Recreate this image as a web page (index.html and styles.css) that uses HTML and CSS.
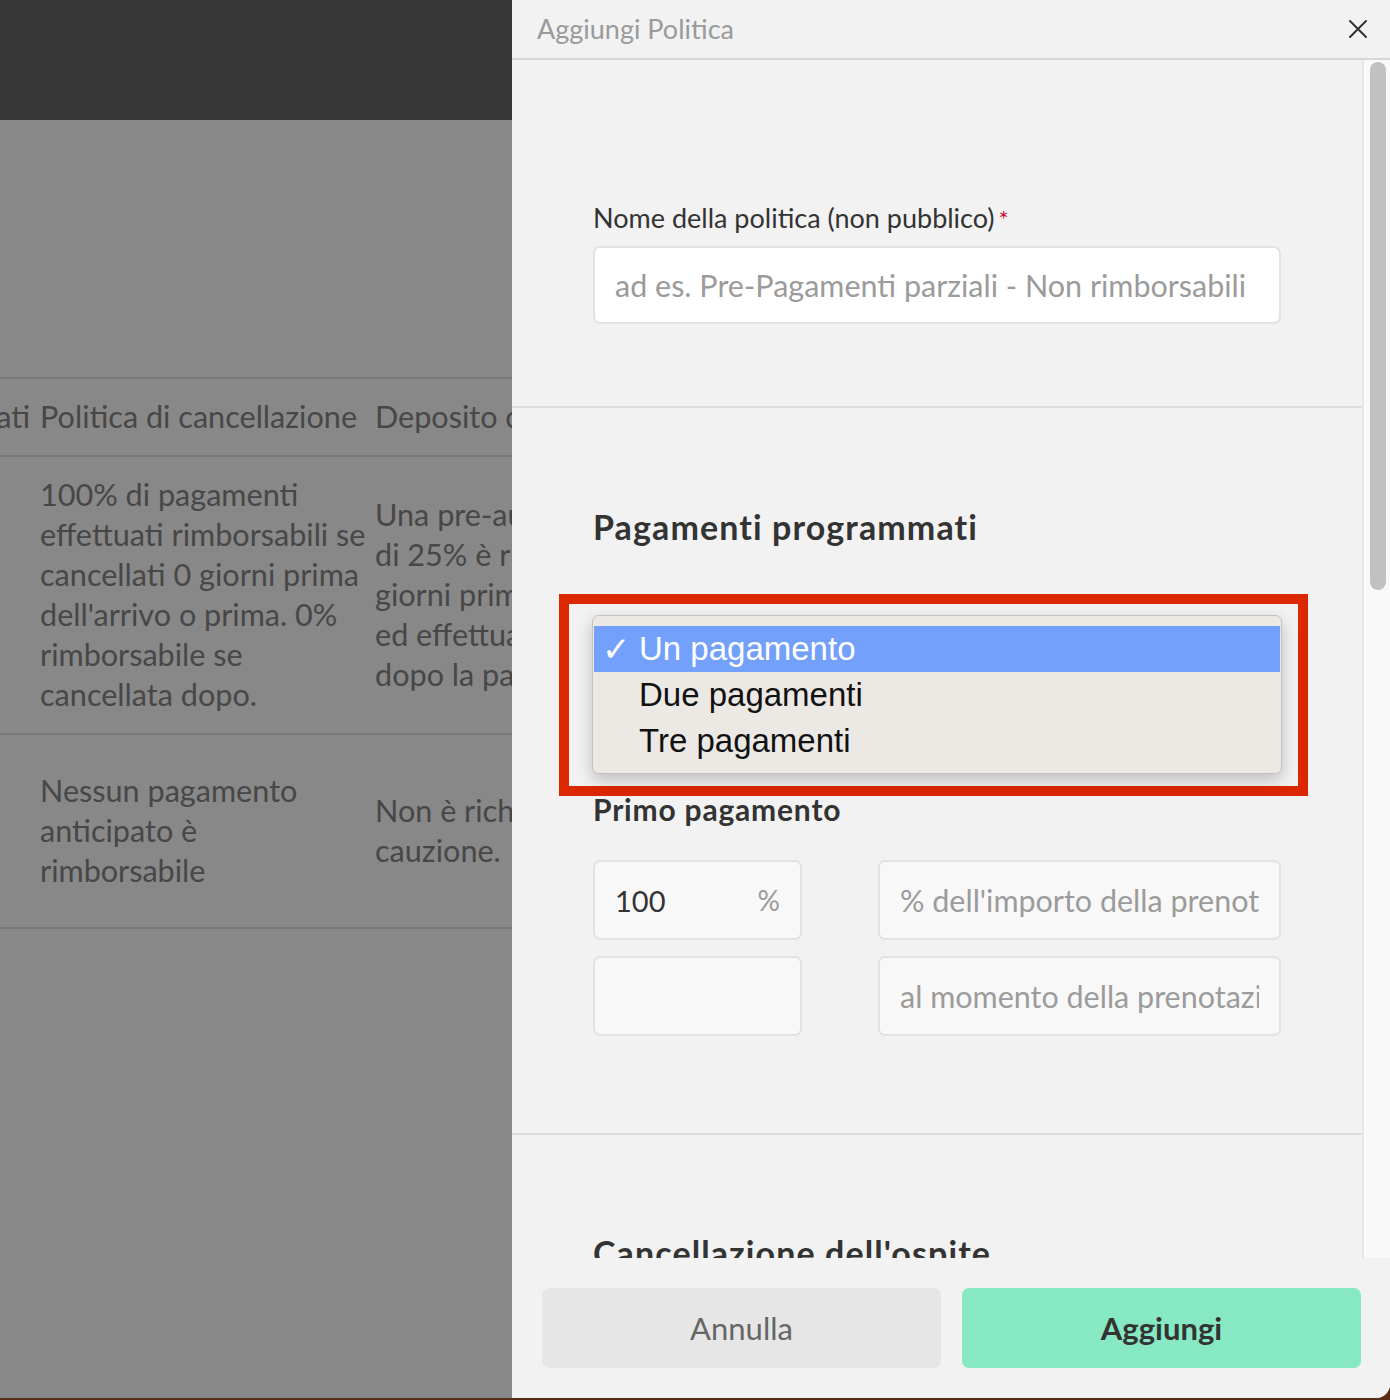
FILE: index.html
```html
<!DOCTYPE html>
<html lang="it">
<head>
<meta charset="utf-8">
<title>Aggiungi Politica</title>
<link rel="stylesheet" href="styles.css">
</head>
<body>
<div class="screen">
  <div class="backdrop">
    <div class="app-bar"></div>
    <div class="app-body">
      <table class="policy-table">
        <colgroup><col class="col-a"><col class="col-b"><col class="col-c"></colgroup>
        <thead>
          <tr>
            <th class="cut"><div class="cut-inner">Pagamenti programmati</div></th>
            <th>Politica di cancellazione</th>
            <th>Deposito cauzionale</th>
          </tr>
        </thead>
        <tbody>
          <tr class="row-a">
            <td></td>
            <td>100% di pagamenti<br>effettuati rimborsabili se<br>cancellati 0 giorni prima<br>dell'arrivo o prima. 0%<br>rimborsabile se<br>cancellata dopo.</td>
            <td>Una pre-autorizzazione<br>di 25% è richiesta 0<br>giorni prima dell'arrivo<br>ed effettuata e rilasciata<br>dopo la partenza.</td>
          </tr>
          <tr class="row-b">
            <td></td>
            <td>Nessun pagamento<br>anticipato è<br>rimborsabile</td>
            <td>Non è richiesta<br>cauzione.</td>
          </tr>
        </tbody>
      </table>
    </div>
  </div>

  <aside class="drawer">
    <header class="drawer-head">
      <h1 class="drawer-title">Aggiungi Politica</h1>
      <button class="close-btn" aria-label="Chiudi">
        <svg width="20" height="20" viewBox="0 0 20 20"><path d="M2 2 L18 18 M18 2 L2 18" stroke="#333" stroke-width="2" fill="none" stroke-linecap="round"/></svg>
      </button>
    </header>

    <div class="drawer-main">
      <div class="drawer-scroll">
        <section class="sec sec-name">
          <label class="field-label">Nome della politica (non pubblico)<span class="req">*</span></label>
          <div class="text-input white"><span class="ph">ad es. Pre-Pagamenti parziali - Non rimborsabili</span></div>
        </section>

        <section class="sec sec-pay">
          <h2 class="sec-title">Pagamenti programmati</h2>
          <div class="select-wrap">
            <div class="text-input select-box"></div>
            <div class="highlight-box"></div>
            <ul class="native-menu">
              <li class="opt active"><span class="check">✓</span>Un pagamento</li>
              <li class="opt"><span class="check"></span>Due pagamenti</li>
              <li class="opt"><span class="check"></span>Tre pagamenti</li>
            </ul>
          </div>
          <h3 class="sub-title">Primo pagamento</h3>
          <div class="pay-grid">
            <div class="text-input pct"><span class="val">100</span><span class="unit">%</span></div>
            <div class="text-input"><span class="ph clip">% dell'importo della prenotazione</span></div>
            <div class="text-input"></div>
            <div class="text-input"><span class="ph clip">al momento della prenotazione</span></div>
          </div>
        </section>

        <section class="sec sec-cancel">
          <h2 class="sec-title">Cancellazione dell'ospite</h2>
        </section>
      </div>
      <div class="scrollbar"><div class="thumb"></div></div>
    </div>

    <footer class="drawer-foot">
      <button class="btn btn-cancel">Annulla</button>
      <button class="btn btn-add">Aggiungi</button>
    </footer>
  </aside>
</div>
</body>
</html>
```

FILE: styles.css
```css
* { box-sizing: border-box; }

html, body {
  margin: 0;
  padding: 0;
}

body {
  background: #5a2b16;
  font-family: "Lato", "Source Sans Pro", "Noto Sans", sans-serif;
  width: 1390px;
  height: 1400px;
  overflow: hidden;
}

.screen {
  display: flex;
  height: 1398px;
}

/* ---------- dimmed app behind ---------- */
.backdrop {
  width: 512px;
  flex: none;
  display: flex;
  flex-direction: column;
  overflow: hidden;
  background: #888888;
}

.app-bar {
  height: 120px;
  background: #363636;
  flex: none;
}

.app-body {
  flex: 1;
  padding-top: 257px;
  overflow: hidden;
}

.policy-table {
  table-layout: fixed;
  width: 775px;
  border-collapse: collapse;
  color: #474747;
  font-size: 30.6px;
  line-height: 40px;
}

.col-a { width: 40px; }
.col-b { width: 335px; }
.col-c { width: 400px; }

.policy-table th {
  font-weight: 400;
  text-align: left;
  white-space: nowrap;
  padding: 18px 10px 18px 0;
  border-top: 2px solid #7a7a7a;
  border-bottom: 2px solid #7a7a7a;
  vertical-align: middle;
  overflow: hidden;
}

.policy-table th.cut {
  padding-right: 10px;
}

.cut-inner {
  display: flex;
  justify-content: flex-end;
  overflow: hidden;
  white-space: nowrap;
}

.policy-table td {
  padding: 18px 10px 18px 0;
  vertical-align: middle;
  border-bottom: 2px solid #7a7a7a;
  white-space: nowrap;
  overflow: hidden;
}

.policy-table .row-b td {
  padding: 36px 10px 36px 0;
}

/* ---------- drawer ---------- */
.drawer {
  width: 878px;
  flex: none;
  display: flex;
  flex-direction: column;
  background: #f2f2f2;
  border-bottom-right-radius: 14px;
  overflow: hidden;
}

.drawer-head {
  height: 60px;
  flex: none;
  display: flex;
  align-items: center;
  justify-content: space-between;
  padding: 0 22px 0 25px;
  border-bottom: 2px solid #d6d6d6;
}

.drawer-title {
  margin: 0;
  font-size: 27px;
  font-weight: 400;
  color: #9a9a9a;
  line-height: 36px;
}

.close-btn {
  border: 0;
  background: none;
  padding: 0;
  width: 20px;
  height: 20px;
  display: flex;
}

.drawer-main {
  flex: 1;
  display: flex;
  min-height: 0;
}

.drawer-scroll {
  width: 850px;
  flex: none;
  overflow: hidden;
}

.scrollbar {
  flex: 1;
  background: #f9f9f9;
  border-left: 2px solid #e6e6e6;
  padding: 2px 0 0 6px;
}

.thumb {
  width: 16px;
  height: 528px;
  border-radius: 8px;
  background: #c1c1c1;
}

.sec {
  padding: 0 81px;
  border-bottom: 2px solid #dcdcdc;
}

.sec-name {
  padding-top: 140px;
  padding-bottom: 82px;
}

.field-label {
  display: block;
  font-size: 27px;
  line-height: 36px;
  color: #333;
  margin-bottom: 10px;
}

.req {
  color: #c8102e;
  font-size: 24px;
  vertical-align: 0;
  margin-left: 4px;
  line-height: 20px;
}

.text-input {
  height: 80px;
  border: 2px solid #e2e2e2;
  border-radius: 7px;
  background: #f8f8f8;
  display: flex;
  align-items: center;
  padding: 0 20px;
  font-size: 30.5px;
  overflow: hidden;
  white-space: nowrap;
}

.text-input.white {
  background: #ffffff;
  height: 78px;
}

.ph {
  color: #9b9b9b;
}

.ph.clip {
  overflow: hidden;
  display: block;
  width: 100%;
}

.sec-pay {
  padding-top: 98px;
  padding-bottom: 97px;
}

.sec-title {
  margin: 0;
  font-size: 34px;
  letter-spacing: 1.1px;
  font-weight: 700;
  line-height: 42px;
  color: #333;
}

.select-wrap {
  position: relative;
  margin-top: 69px;
}

.select-box {
  background: #ffffff;
}

.highlight-box {
  position: absolute;
  left: -34px;
  top: -23px;
  width: 749px;
  height: 202px;
  border: 10px solid #dc2800;
  z-index: 1;
}

.native-menu {
  position: absolute;
  left: -1px;
  top: -2px;
  width: 690px;
  height: 159px;
  margin: 0;
  padding: 10px 1px 0;
  list-style: none;
  background: #ece9e5;
  border: 1px solid #c4c2bf;
  border-radius: 7px;
  box-shadow: 0 6px 16px rgba(0, 0, 0, 0.22);
  z-index: 2;
  font-family: "Liberation Sans", Arial, sans-serif;
  font-size: 33px;
  color: #111;
}

.opt {
  height: 46px;
  display: flex;
  align-items: center;
  padding-left: 10px;
}

.opt.active {
  background: #73a0fb;
  color: #fff;
}

.check {
  width: 35px;
  flex: none;
  font-family: "DejaVu Sans", sans-serif;
  font-size: 34px;
  line-height: 40px;
  margin-left: -2px;
  margin-right: 2px;
}

.sub-title {
  margin: 94px 0 0;
  font-size: 30px;
  letter-spacing: 0.8px;
  font-weight: 700;
  line-height: 36px;
  color: #333;
}

.pay-grid {
  margin-top: 33px;
  display: grid;
  grid-template-columns: 209px 403px;
  column-gap: 76px;
  row-gap: 16px;
}

.pct {
  justify-content: space-between;
}

.val {
  color: #333;
  font-size: 29px;
}

.unit {
  color: #9b9b9b;
  font-size: 28px;
}

.sec-cancel {
  padding-top: 97px;
  padding-bottom: 40px;
  border-bottom: 0;
}

/* ---------- footer ---------- */
.drawer-foot {
  flex: none;
  height: 140px;
  display: flex;
  gap: 21px;
  padding: 30px 29px 30px 30px;
  background: #f2f2f2;
}

.btn {
  flex: 1;
  height: 80px;
  border: 0;
  border-radius: 7px;
  font-family: inherit;
  font-size: 31px;
}

.btn-cancel {
  background: #e6e6e6;
  color: #666;
}

.btn-add {
  background: #86e9c4;
  color: #333;
  font-weight: 700;
}
```
